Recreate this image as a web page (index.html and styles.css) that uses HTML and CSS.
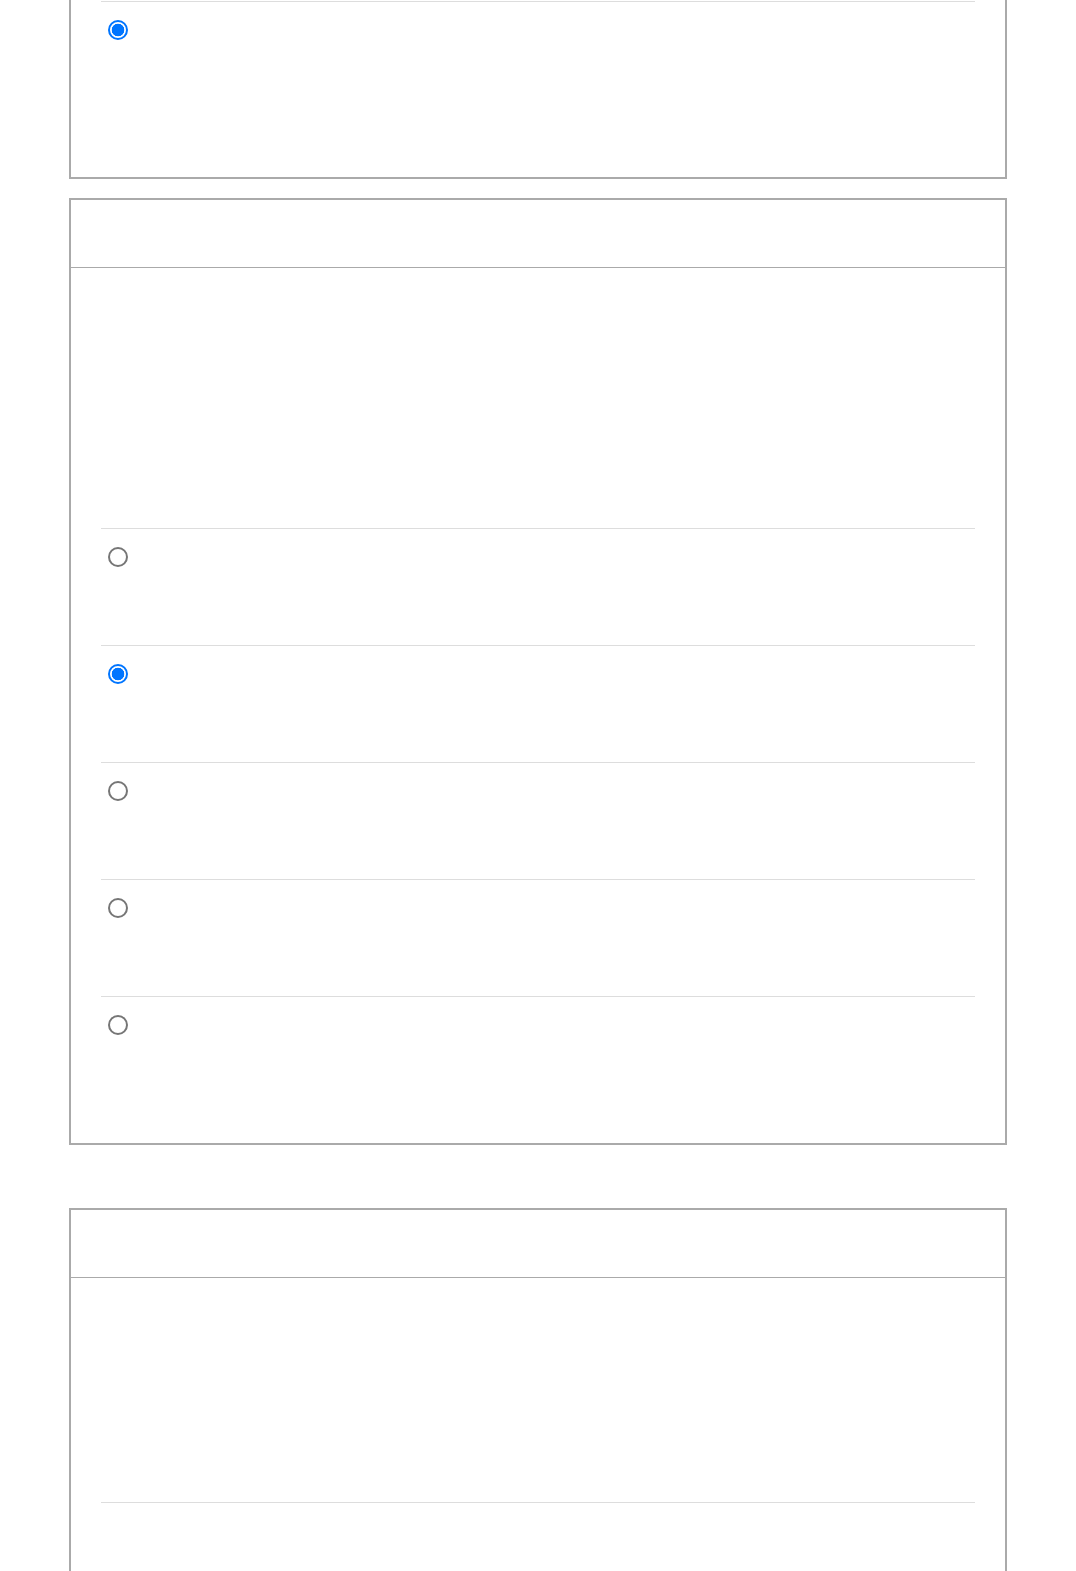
FILE: index.html
```html
<!DOCTYPE html>
<html>
    <head>
        <meta name="viewport" content="width=device-width, initial-scale=1.0">
        <link rel="stylesheet" href="styles.css">
    </head>
    <body>
        <div id="survey">

            <section class="card card-cut">
                <div class="card-body last-tall">
                    <div class="option">
                        <input type="radio" name="q1" checked>
                    </div>
                </div>
            </section>

            <section class="card">
                <div class="card-head"></div>
                <div class="card-body">
                    <div class="intro"></div>
                    <div class="option"><input type="radio" name="q2"></div>
                    <div class="option"><input type="radio" name="q2" checked></div>
                    <div class="option"><input type="radio" name="q2"></div>
                    <div class="option"><input type="radio" name="q2"></div>
                    <div class="option"><input type="radio" name="q2"></div>
                </div>
            </section>

            <section class="card card-next">
                <div class="card-head"></div>
                <div class="card-body">
                    <div class="intro intro-short"></div>
                    <div class="option"></div>
                </div>
            </section>

        </div>
    </body>
</html>
```

FILE: styles.css
```css
* {
    margin: 0;
    padding: 0;
    box-sizing: border-box;
}
body {
    margin: 0;
    padding: 0 69px;
    font-family: "Liberation Sans", Arial, sans-serif;
    background-color: white;
}
#survey {
    width: 938px;
}
.card {
    border: 2px solid rgb(170, 170, 170);
    background: white;
    margin-top: 19px;
}
.card-cut {
    border-top: none;
    margin-top: 0;
}
.card-next {
    margin-top: 63px;
}
.card-head {
    height: 68px;
    border-bottom: 1px solid rgb(170, 170, 170);
}
.card-body {
    padding: 0 30px 30px 30px;
}
.card-cut .card-body {
    padding-top: 1px;
}
.last-tall {
    padding-bottom: 59px !important;
}
.intro {
    height: 260px;
}
.intro-short {
    height: 224px;
}
.option {
    border-top: 1px solid rgb(221, 221, 221);
    height: 117px;
    padding: 18px 0 0 7px;
}
.option input[type="radio"] {
    appearance: none;
    -webkit-appearance: none;
    width: 20px;
    height: 20px;
    margin: 0;
    display: block;
    border: 2px solid rgb(118, 118, 118);
    border-radius: 50%;
    background: white;
}
.option input[type="radio"]:checked {
    border-color: rgb(0, 117, 255);
    background: radial-gradient(circle, rgb(0, 117, 255) 0 6px, white 6.6px);
}
```
